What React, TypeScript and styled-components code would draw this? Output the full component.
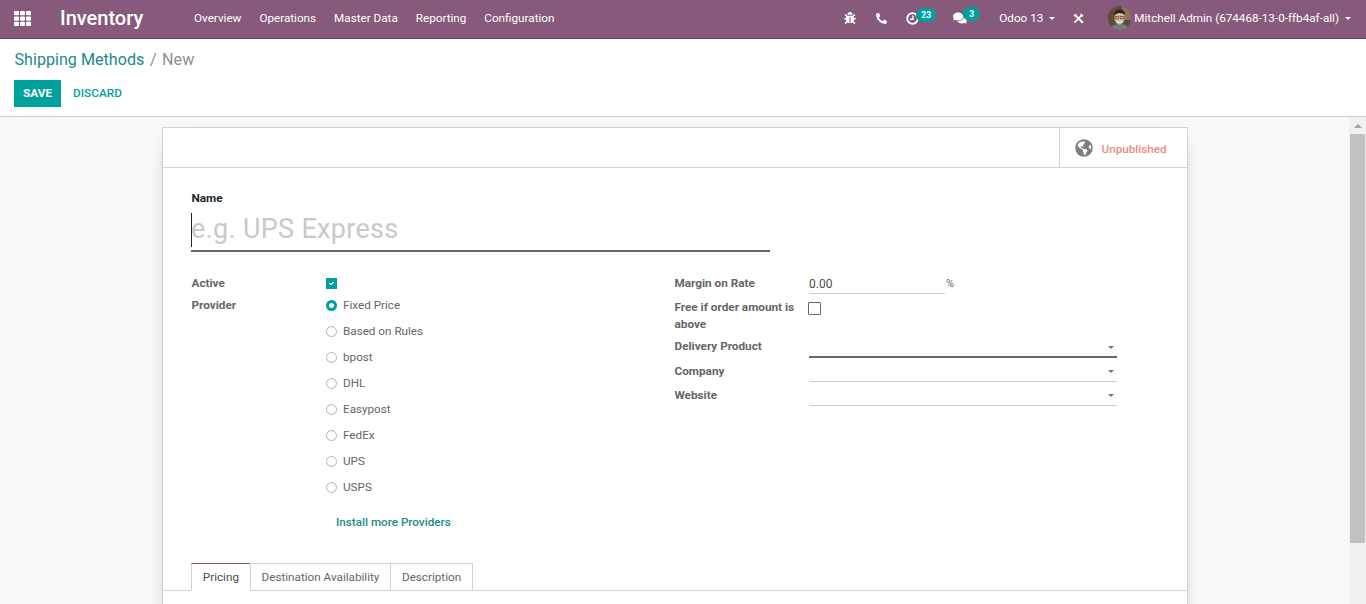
import React from "react";
import styled, { createGlobalStyle } from "styled-components";
import { FaTh, FaBug, FaPhoneAlt, FaComments, FaGlobeAmericas, FaCheck } from "react-icons/fa";

const GlobalStyle = createGlobalStyle`
  html, body, #root { margin: 0; height: 100%; }
  body { font-family: Roboto, "Liberation Sans", sans-serif; font-size: 11.7px; color: #4c4c4c; overflow: hidden; }
  * { box-sizing: border-box; }
`;

const Page = styled.div`
  display: flex;
  flex-direction: column;
  height: 604px;
`;

const NavBar = styled.header`
  display: flex;
  align-items: center;
  flex: 0 0 39px;
  height: 39px;
  padding: 0 15px 2px 14px;
  background: #875a7b;
  border-bottom: 1px solid #5f4057;
  color: #fff;
`;

const AppsButton = styled.span`
  display: flex;
  font-size: 17px;
  margin-right: 29px;
`;

const Brand = styled.span`
  width: 134px;
  font-size: 20px;
  font-weight: 500;
`;

const MenuList = styled.nav`
  display: flex;
  gap: 18px;
`;

const SysTray = styled.div`
  display: flex;
  align-items: center;
  margin-left: auto;
`;

const TrayIcon = styled.span<{ $w: number }>`
  position: relative;
  display: flex;
  align-items: center;
  width: ${(p) => p.$w}px;
  font-size: 12px;
`;

const Badge = styled.span`
  position: absolute;
  top: -4px;
  left: 10px;
  height: 14px;
  min-width: 17px;
  padding: 0 5px;
  border-radius: 7px;
  background: #00a09d;
  color: #fff;
  font-size: 8.5px;
  font-weight: 700;
  line-height: 14px;
  text-align: center;
`;

const Caret = styled.span<{ $color?: string }>`
  display: inline-block;
  width: 0;
  height: 0;
  border-left: 3.5px solid transparent;
  border-right: 3.5px solid transparent;
  border-top: 3.5px solid ${(p) => p.$color || "#fff"};
`;

const TrayText = styled.span<{ $w?: number }>`
  display: flex;
  align-items: center;
  gap: 6px;
  ${(p) => (p.$w ? `width: ${p.$w}px;` : "")}
`;

const Avatar = styled.svg`
  width: 23px;
  height: 24px;
  margin-right: -3px;
  border-radius: 50%;
`;

const ControlPanel = styled.section`
  flex: 0 0 78px;
  padding: 0 14px;
  background: #fff;
  border-bottom: 1px solid #cfcfcf;
`;

const Breadcrumb = styled.div`
  display: flex;
  gap: 5.5px;
  height: 41px;
  padding: 11px 0 0 0.5px;
  font-size: 16.15px;
  line-height: 20px;
`;

const Crumb = styled.span`
  color: #1b8a8c;
`;

const CrumbCurrent = styled.span`
  color: #8f8f8f;
`;

const Buttons = styled.div`
  display: flex;
  align-items: center;
`;

const SaveButton = styled.button`
  width: 47px;
  height: 27px;
  border: 0;
  padding: 0 0 2px;
  background: #00a09d;
  color: #fff;
  font: 700 11.8px Roboto, sans-serif;
`;

const DiscardButton = styled.button`
  margin-left: 12px;
  border: 0;
  padding: 0 0 2px;
  background: none;
  color: #00a09d;
  font: 500 11.8px Roboto, sans-serif;
`;

const ContentRow = styled.div`
  flex: 1;
  display: flex;
  min-height: 0;
  background: #f9f9f9;
`;

const Scroller = styled.main`
  flex: 1;
  min-width: 0;
  overflow: hidden;
  padding: 10px 0 0 162px;
`;

const Sheet = styled.div`
  width: 1026px;
  height: 600px;
  background: #fff;
  border: 1px solid #ced4da;
  box-shadow: 0 5px 20px -15px #000;
`;

const ButtonBox = styled.div`
  display: flex;
  justify-content: flex-end;
  height: 40px;
  border-bottom: 1px solid #ced4da;
`;

const StatButton = styled.div`
  display: flex;
  align-items: center;
  width: 128px;
  padding-left: 15px;
  border-left: 1px solid #ced4da;
  color: #7f7f7f;
  font-size: 18px;
`;

const StatLabel = styled.span`
  margin-left: 8.5px;
  padding-top: 3px;
  color: #ec8b8b;
  font-size: 11.7px;
  font-weight: 500;
`;

const FormBody = styled.div`
  padding: 23px 70px 0 28px;
`;

const FieldLabel = styled.label`
  display: block;
  padding-left: 0.5px;
  color: #666;
  font-weight: 700;
  font-size: 11.75px;
  line-height: 14px;
`;

const NameLabel = styled(FieldLabel)`
  color: #212529;
`;

const NameInput = styled.div`
  position: relative;
  width: 579px;
  height: 42px;
  margin-top: 5px;
  border-bottom: 2px solid #666;
  color: #c9c9c9;
  font-size: 27px;
  letter-spacing: 0.3px;
  line-height: 38px;
  &::before {
    content: "";
    position: absolute;
    left: 0;
    top: 3px;
    width: 1px;
    height: 34px;
    background: #222;
  }
`;

const Columns = styled.div`
  display: grid;
  grid-template-columns: 483px 1fr;
  margin-top: 23px;
`;

const FieldGrid = styled.div`
  display: grid;
  grid-template-columns: 135px 1fr;
  align-content: start;
`;

const LeftLabel = styled(FieldLabel)`
  height: 22px;
  padding-top: 1px;
`;

const CheckedBox = styled.span`
  display: flex;
  align-items: center;
  justify-content: center;
  width: 11px;
  height: 11px;
  margin-top: 3px;
  background: #00a09d;
  color: #fff;
  font-size: 5px;
`;

const RadioList = styled.div`
  display: flex;
  flex-direction: column;
  margin-top: -5px;
`;

const RadioRow = styled.div`
  display: flex;
  align-items: center;
  gap: 6px;
  height: 26px;
  color: #666;
`;

const RadioDot = styled.span<{ $on?: boolean }>`
  width: 11px;
  height: 11px;
  border-radius: 50%;
  border: ${(p) => (p.$on ? "3.5px solid #00a09d" : "1px solid #adb5bd")};
  background: #fff;
`;

const InstallLink = styled.a`
  margin: 15px 0 0 10px;
  color: #1b8a8c;
  font-weight: 500;
`;

const RightGrid = styled.div`
  display: grid;
  grid-template-columns: 135px 308px;
  align-content: start;
`;

const RightLabel = styled(FieldLabel)<{ $h: number; $top?: number }>`
  height: ${(p) => p.$h}px;
  padding-top: ${(p) => p.$top || 0}px;
  line-height: 17px;
`;

const RateRow = styled.div`
  display: flex;
  color: #666;
`;

const RateInput = styled.div`
  width: 136px;
  height: 19px;
  padding-top: 2px;
  border-bottom: 1px solid #ccc;
  color: #4c4c4c;
  font-size: 12px;
`;

const Percent = styled.span`
  margin: 2px 0 0 1px;
  font-size: 11px;
`;

const EmptyBox = styled.span`
  display: block;
  width: 13px;
  height: 13px;
  margin: 8px 0 0 -1px;
  border: 1px solid #666;
  border-radius: 1px;
`;

const SelectField = styled.div<{ $focus?: boolean; $top: number }>`
  display: flex;
  align-items: center;
  justify-content: flex-end;
  padding: ${(p) => p.$top}px 3px 0 0;
  border-bottom: ${(p) => (p.$focus ? "2px solid #666" : "1px solid #ccc")};
`;

const TabsWrap = styled.div`
  margin-top: 34px;
`;

const Tabs = styled.div`
  display: flex;
  height: 28px;
  margin: 0 -70px 0 -28px;
  padding-left: 28px;
  border-bottom: 1px solid #ced4da;
`;

const Tab = styled.div<{ $active?: boolean }>`
  height: 28px;
  padding: 0 10.8px;
  margin-left: -1px;
  border: 1px solid #ced4da;
  border-top-color: ${(p) => (p.$active ? "#875a7b" : "#ced4da")};
  border-bottom-color: ${(p) => (p.$active ? "#fff" : "#ced4da")};
  background: #fff;
  color: ${(p) => (p.$active ? "#4c4c4c" : "#666")};
  line-height: 26px;
  &:first-child { margin-left: 0; }
`;

const Scrollbar = styled.div`
  display: flex;
  flex-direction: column;
  flex: 0 0 17px;
  background: #f1f1f1;
`;

const ScrollArrow = styled.div`
  display: flex;
  align-items: center;
  justify-content: center;
  height: 17px;
  &::before {
    content: "";
    border-left: 4px solid transparent;
    border-right: 4px solid transparent;
    border-bottom: 4px solid #a3a3a3;
  }
`;

const ScrollThumb = styled.div`
  width: 15px;
  height: 409px;
  margin-left: 1px;
  background: #c1c1c1;
`;

const ClockIcon = () => (
  <svg width="13" height="13" viewBox="0 0 13 13" fill="none" stroke="#fff">
    <circle cx="6.5" cy="6.5" r="5.3" strokeWidth="1.8" />
    <path d="M7 3.5V7.2H4" strokeWidth="1.4" />
  </svg>
);

const ToolsIcon = () => (
  <svg width="11" height="11" viewBox="0 0 11 11" fill="none" stroke="#fff">
    <path d="M2.5 2.5L9.8 9.8" strokeWidth="2" />
    <path d="M1 3.2L3.2 1" strokeWidth="1.4" />
    <path d="M9 2L1.4 9.6" strokeWidth="1.7" />
    <path d="M7.6 1.2L9.8 3.4" strokeWidth="2" />
  </svg>
);

const providers = ["Fixed Price", "Based on Rules", "bpost", "DHL", "Easypost", "FedEx", "UPS", "USPS"];

const App = () => {
  return (
    <Page>
      <GlobalStyle />
      <NavBar>
        <AppsButton><FaTh /></AppsButton>
        <Brand>Inventory</Brand>
        <MenuList>
          <span>Overview</span>
          <span>Operations</span>
          <span>Master Data</span>
          <span>Reporting</span>
          <span>Configuration</span>
        </MenuList>
        <SysTray>
          <TrayIcon $w={32}><FaBug /></TrayIcon>
          <TrayIcon $w={30}><FaPhoneAlt size={11} /></TrayIcon>
          <TrayIcon $w={47}><ClockIcon /><Badge>23</Badge></TrayIcon>
          <TrayIcon $w={46}><FaComments size={14} /><Badge>3</Badge></TrayIcon>
          <TrayText $w={74}>Odoo 13 <Caret /></TrayText>
          <TrayIcon $w={35}><ToolsIcon /></TrayIcon>
          <TrayText>
            <Avatar viewBox="0 0 23 24">
              <rect width="23" height="24" fill="#5e4b38" />
              <rect x="14" width="9" height="14" fill="#8a7558" />
              <path d="M2 24 Q3 18 11.5 18 Q20 18 21 24 Z" fill="#6f8078" />
              <ellipse cx="11.5" cy="11.5" rx="5.2" ry="7" fill="#d8b49b" />
              <path d="M6 10 Q6 3.5 11.5 3.5 Q17 3.5 17 9 Q14 6.5 10.5 7 Q8 7.5 6 10 Z" fill="#2c221c" />
              <path d="M7 10.5h3.6v2.2h-3.6zM12.4 10.5h3.6v2.2h-3.6z" fill="none" stroke="#4a3a30" strokeWidth="0.7" />
              <path d="M9 15.5 Q11.5 17.2 14 15.5" stroke="#fff" strokeWidth="1" fill="none" />
            </Avatar>
            <span>Mitchell Admin (674468-13-0-ffb4af-all)</span>
            <Caret />
          </TrayText>
        </SysTray>
      </NavBar>
      <ControlPanel>
        <Breadcrumb>
          <Crumb>Shipping Methods</Crumb>
          <CrumbCurrent>/</CrumbCurrent>
          <CrumbCurrent>New</CrumbCurrent>
        </Breadcrumb>
        <Buttons>
          <SaveButton>SAVE</SaveButton>
          <DiscardButton>DISCARD</DiscardButton>
        </Buttons>
      </ControlPanel>
      <ContentRow>
        <Scroller>
          <Sheet>
            <ButtonBox>
              <StatButton>
                <FaGlobeAmericas />
                <StatLabel>Unpublished</StatLabel>
              </StatButton>
            </ButtonBox>
            <FormBody>
              <NameLabel>Name</NameLabel>
              <NameInput>e.g. UPS Express</NameInput>
              <Columns>
                <FieldGrid>
                  <LeftLabel>Active</LeftLabel>
                  <CheckedBox><FaCheck /></CheckedBox>
                  <LeftLabel>Provider</LeftLabel>
                  <RadioList>
                    {providers.map((name, i) => (
                      <RadioRow key={name}>
                        <RadioDot $on={i === 0} />
                        {name}
                      </RadioRow>
                    ))}
                    <InstallLink>Install more Providers</InstallLink>
                  </RadioList>
                </FieldGrid>
                <RightGrid>
                  <RightLabel $h={19}>Margin on Rate</RightLabel>
                  <RateRow>
                    <RateInput>0.00</RateInput>
                    <Percent>%</Percent>
                  </RateRow>
                  <RightLabel $h={44} $top={5}>Free if order amount is above</RightLabel>
                  <div><EmptyBox /></div>
                  <RightLabel $h={20}>Delivery Product</RightLabel>
                  <SelectField $focus $top={0}><Caret $color="#777" /></SelectField>
                  <RightLabel $h={24} $top={5}>Company</RightLabel>
                  <SelectField $top={3}><Caret $color="#777" /></SelectField>
                  <RightLabel $h={24} $top={5}>Website</RightLabel>
                  <SelectField $top={3}><Caret $color="#777" /></SelectField>
                </RightGrid>
              </Columns>
              <TabsWrap>
                <Tabs>
                  <Tab $active>Pricing</Tab>
                  <Tab>Destination Availability</Tab>
                  <Tab>Description</Tab>
                </Tabs>
              </TabsWrap>
            </FormBody>
          </Sheet>
        </Scroller>
        <Scrollbar>
          <ScrollArrow />
          <ScrollThumb />
        </Scrollbar>
      </ContentRow>
    </Page>
  );
};

export default App;
